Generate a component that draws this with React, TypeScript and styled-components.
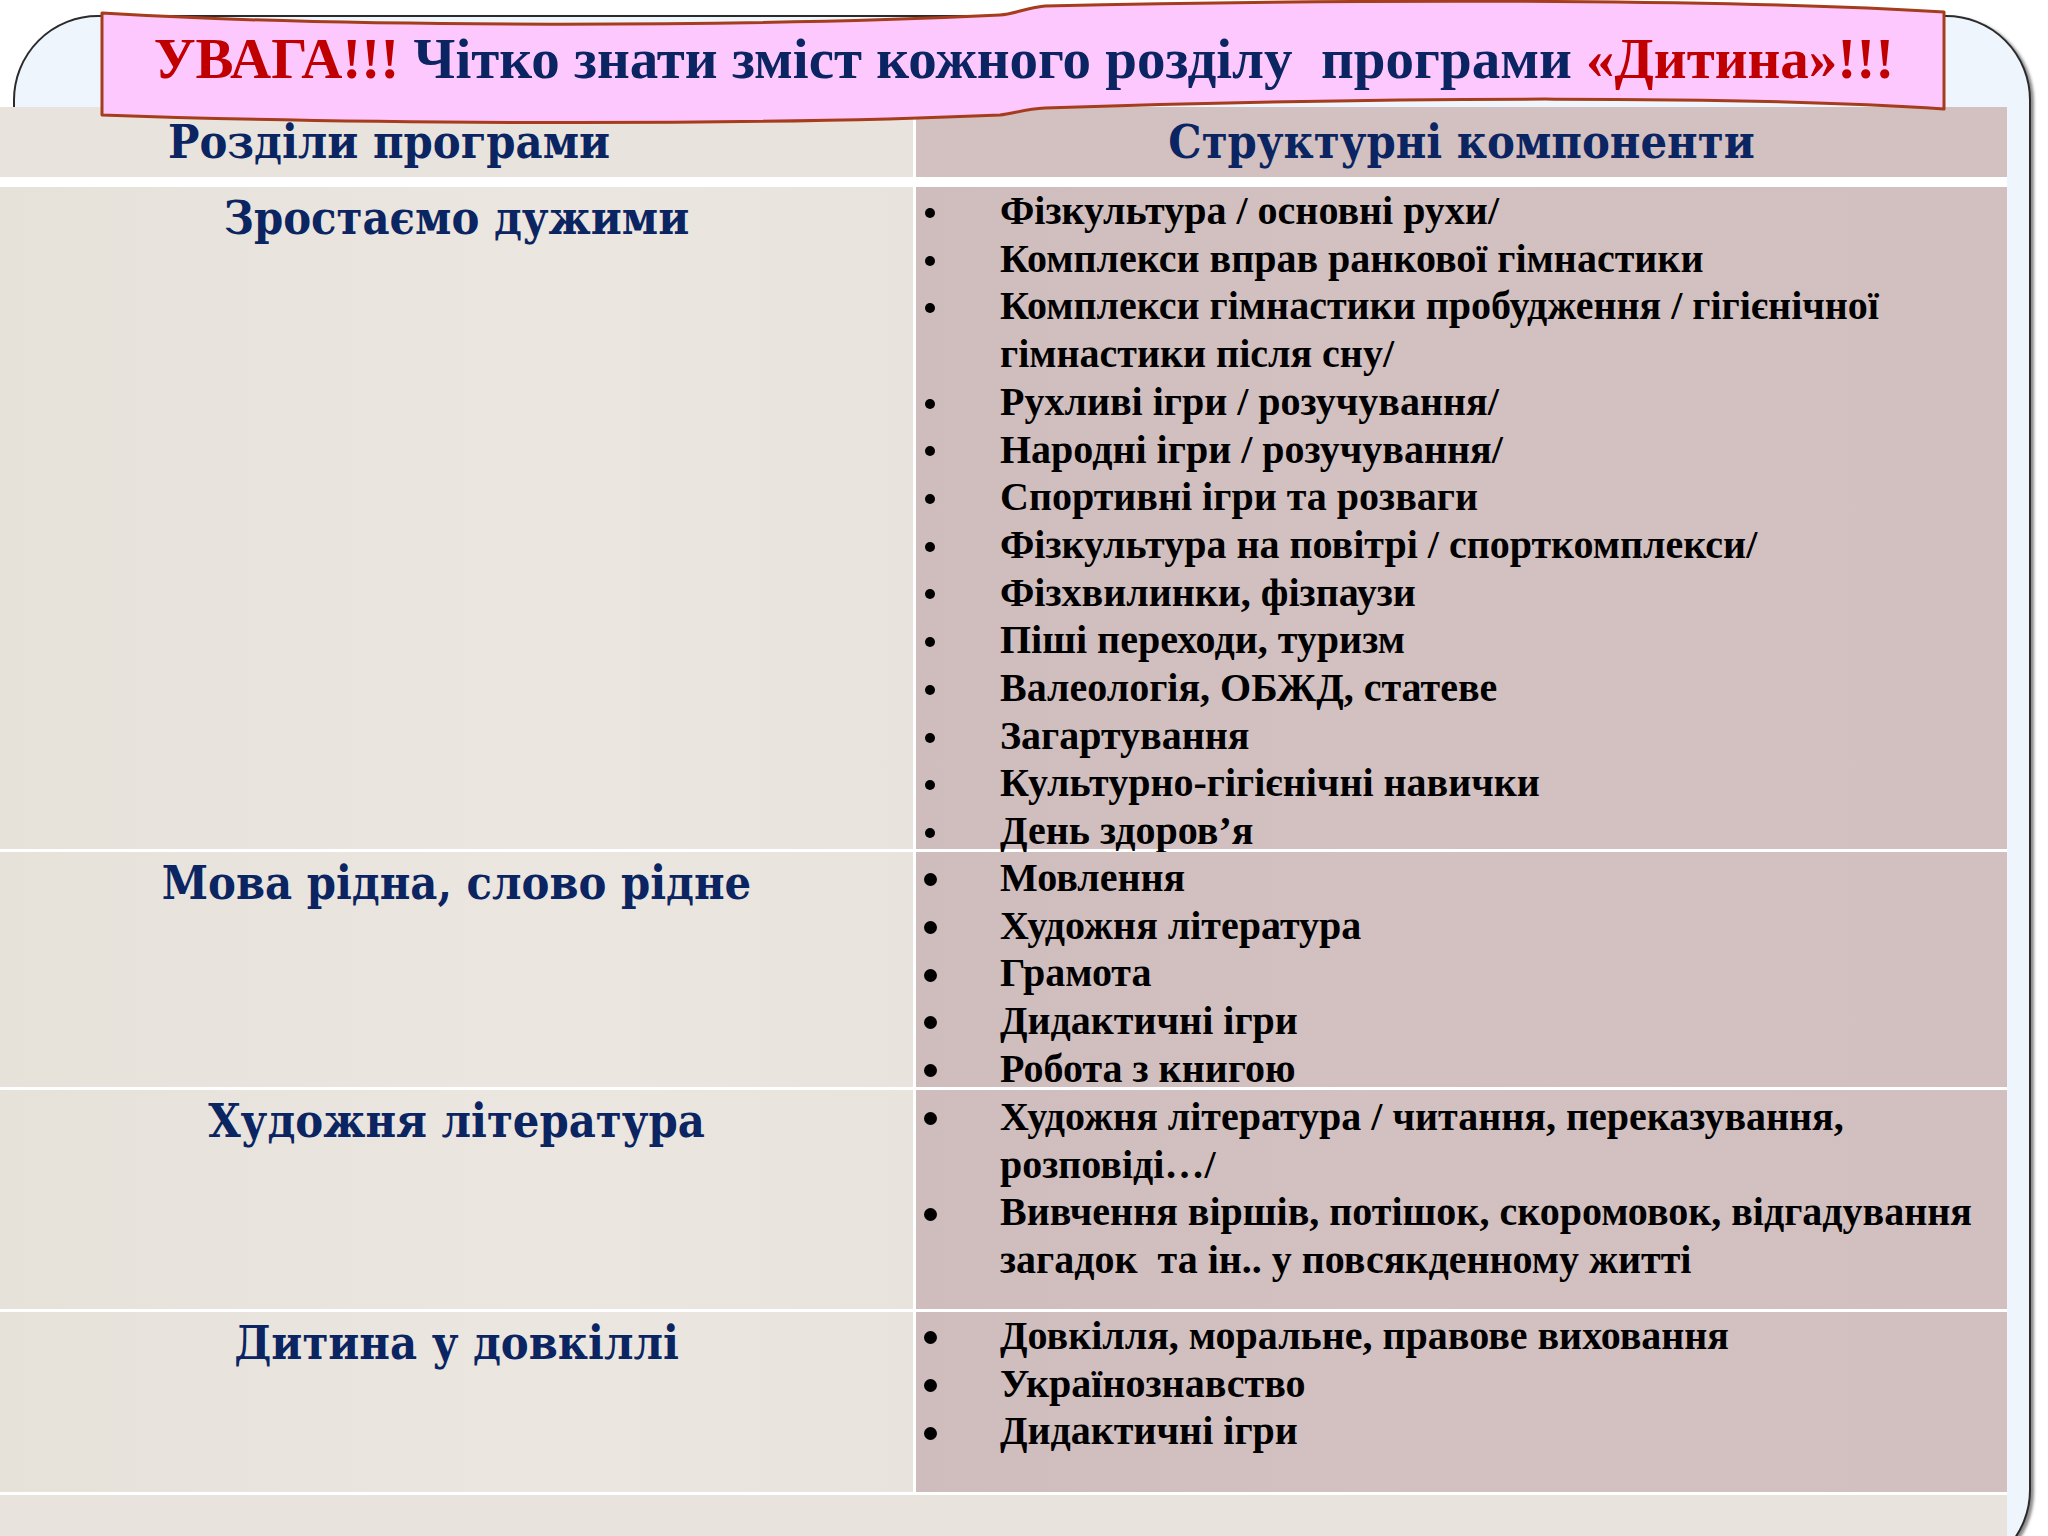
import React from "react";
import styled, { createGlobalStyle } from "styled-components";

const NAVY = "#0b2462";
const RED = "#c00000";
const LEFT_BG = "#e8e4dd";
const RIGHT_BG = "#d3c1c1";

type Section = {
  title: string;
  height: number;
  padTop: number;
  dot: number;
  items: string[][];
};

const sections: Section[] = [
  {
    title: "Зростаємо дужими",
    height: 662,
    padTop: 0,
    dot: 10,
    items: [
      ["Фізкультура / основні рухи/"],
      ["Комплекси вправ ранкової гімнастики"],
      ["Комплекси гімнастики пробудження / гігієнічної", "гімнастики після сну/"],
      ["Рухливі ігри / розучування/"],
      ["Народні ігри / розучування/"],
      ["Спортивні ігри та розваги"],
      ["Фізкультура на повітрі / спорткомплекси/"],
      ["Фізхвилинки, фізпаузи"],
      ["Піші переходи, туризм"],
      ["Валеологія, ОБЖД, статеве"],
      ["Загартування"],
      ["Культурно-гігієнічні навички"],
      ["День здоров’я"],
    ],
  },
  {
    title: "Мова рідна, слово рідне",
    height: 235,
    padTop: 2,
    dot: 13,
    items: [["Мовлення"], ["Художня література"], ["Грамота"], ["Дидактичні ігри"], ["Робота з книгою"]],
  },
  {
    title: "Художня література",
    height: 219,
    padTop: 3,
    dot: 13,
    items: [
      ["Художня література / читання, переказування,", "розповіді…/"],
      ["Вивчення віршів, потішок, скоромовок, відгадування", "загадок  та ін.. у повсякденному житті"],
    ],
  },
  {
    title: "Дитина у довкіллі",
    height: 180,
    padTop: 0,
    dot: 13,
    items: [["Довкілля, моральне, правове виховання"], ["Українознавство"], ["Дидактичні ігри"]],
  },
];

const GlobalStyle = createGlobalStyle`
  html, body {
    margin: 0;
    padding: 0;
    background: #ffffff;
  }
`;

const Page = styled.div`
  width: 2048px;
  height: 1536px;
  overflow: hidden;
  display: grid;
  grid-template-columns: 2048px;
  grid-template-rows: 1536px;
`;

const Frame = styled.div`
  grid-area: 1 / 1;
  margin: 15px 0 0 13px;
  width: 2018px;
  height: 1560px;
  box-sizing: border-box;
  background: #eef5fc;
  border: 2px solid #2b2b2b;
  border-radius: 85px;
  box-shadow: 3px 2px 3px rgba(0, 0, 0, 0.45);
`;

const Table = styled.div`
  grid-area: 1 / 1;
  margin-top: 107px;
  width: 2007px;
  display: flex;
  flex-direction: column;
  gap: 3px;
  background: #ffffff;
  align-self: start;
`;

const Row = styled.div<{ $h: number; $gapAfter?: number }>`
  display: grid;
  grid-template-columns: 913px 1091px;
  grid-template-rows: minmax(0, 1fr);
  column-gap: 3px;
  flex: none;
  height: ${({ $h }) => $h}px;
  margin-bottom: ${({ $gapAfter = 0 }) => $gapAfter}px;
`;

const LeftCell = styled.div`
  background: linear-gradient(90deg, #e6e2da 0%, #ebe6e0 60%, #e8e3dc 100%);
  display: flex;
  flex-direction: column;
  align-items: center;
  min-height: 0;
`;

const RightCell = styled.div<{ $pt: number }>`
  background: linear-gradient(90deg, #cfbdbd 0%, ${RIGHT_BG} 40%, #d2c0c0 100%);
  padding-top: ${({ $pt }) => $pt}px;
  box-sizing: border-box;
  min-height: 0;
`;

const HeadCell = styled.div<{ $tone: "left" | "right"; $center?: boolean }>`
  background: ${({ $tone }) => ($tone === "left" ? LEFT_BG : RIGHT_BG)};
  display: flex;
  align-items: center;
  justify-content: ${({ $center }) => ($center ? "center" : "flex-start")};
  padding-left: ${({ $center }) => ($center ? 0 : 168)}px;
`;

const Heading = styled.div`
  font-family: "DejaVu Serif Condensed", "DejaVu Serif", serif;
  font-stretch: condensed;
  font-weight: 700;
  font-size: 46.5px;
  line-height: 62px;
  color: ${NAVY};
  white-space: nowrap;
`;

const Item = styled.div`
  display: grid;
  grid-template-columns: 84px 1fr;
`;

const Dot = styled.span<{ $size: number }>`
  display: flex;
  align-items: center;
  height: 47.7px;
  padding-left: ${({ $size }) => 14 - $size / 2}px;
  &::before {
    content: "";
    width: ${({ $size }) => $size}px;
    height: ${({ $size }) => $size}px;
    border-radius: 50%;
    background: #000;
    margin-top: 4px;
  }
`;

const Lines = styled.div`
  font-family: "Liberation Serif", "Times New Roman", serif;
  font-weight: 700;
  font-size: 40px;
  line-height: 47.7px;
  color: #000;
  white-space: pre;
`;

const FootRow = styled.div`
  height: 60px;
  background: ${LEFT_BG};
`;

const Banner = styled.div`
  grid-area: 1 / 1;
  position: relative;
  margin: 0 0 0 100px;
  width: 1848px;
  height: 128px;
  align-self: start;
  display: flex;
  justify-content: center;
  box-sizing: border-box;
  padding-top: 27px;
`;

const Ribbon = styled.svg`
  position: absolute;
  inset: 0;
  width: 100%;
  height: 100%;
  overflow: visible;
`;

const Title = styled.div`
  position: relative;
  font-family: "Liberation Serif", "Times New Roman", serif;
  font-weight: 700;
  font-size: 57px;
  line-height: 64px;
  color: ${NAVY};
  white-space: pre;
`;

const Alert = styled.span`
  color: ${RED};
`;

export default function App() {
  return (
    <>
      <GlobalStyle />
      <Page>
        <Frame />
        <Table>
          <Row $h={70} $gapAfter={7}>
            <HeadCell $tone="left">
              <Heading>Розділи програми</Heading>
            </HeadCell>
            <HeadCell $tone="right" $center>
              <Heading>Структурні компоненти</Heading>
            </HeadCell>
          </Row>
          {sections.map((s) => (
            <Row key={s.title} $h={s.height}>
              <LeftCell>
                <Heading>{s.title}</Heading>
              </LeftCell>
              <RightCell $pt={s.padTop}>
                {s.items.map((lines) => (
                  <Item key={lines[0]}>
                    <Dot $size={s.dot} />
                    <Lines>{lines.join("\n")}</Lines>
                  </Item>
                ))}
              </RightCell>
            </Row>
          ))}
          <FootRow />
        </Table>
        <Banner>
          <Ribbon viewBox="0 0 1848 128" preserveAspectRatio="none">
            <path
              d="M2,13 C250,28 650,27 900,15 C915,14 925,8 945,6 C1300,-2 1650,0 1844,12 L1844,109 C1650,96 1300,96 945,108 C925,109 912,114 900,115 C650,126 250,124 2,115 Z"
              fill="#fdc8fd"
              stroke="#a53d1c"
              strokeWidth="3"
              strokeLinejoin="round"
            />
          </Ribbon>
          <Title>
            <Alert>УВАГА!!!</Alert>
            {" Чітко знати зміст кожного розділу  програми "}
            <Alert>«Дитина»!!!</Alert>
          </Title>
        </Banner>
      </Page>
    </>
  );
}
